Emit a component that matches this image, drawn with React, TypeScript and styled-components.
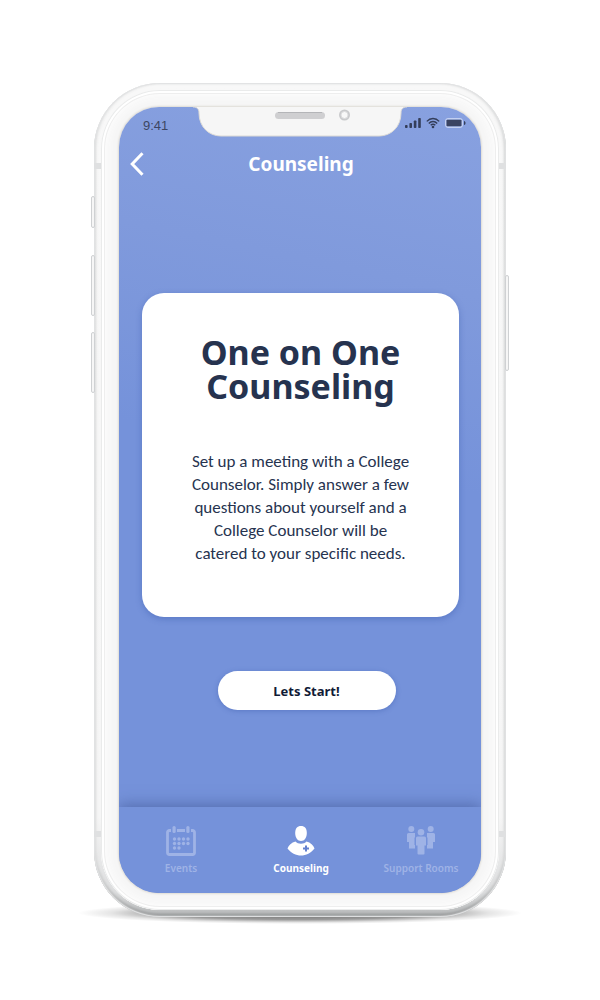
import React from "react";
import styled, { createGlobalStyle, css } from "styled-components";

const GlobalStyle = createGlobalStyle`
  *, *::before, *::after { box-sizing: border-box; }
  body {
    margin: 0;
    background: #ffffff;
    font-family: "Noto Sans", sans-serif;
  }
`;

const ink = "#26334f";

const Page = styled.div`
  min-height: 100vh;
  display: flex;
  justify-content: center;
  padding: 83px 16px;
`;

const Phone = styled.div`
  position: relative;
  width: 100%;
  max-width: 412px;
  display: flex;
  padding: 7px;
  border-radius: 66px;
  background: linear-gradient(180deg, #f8f8f8 0%, #f6f6f6 88%, #dcddde 97%, #b4b6b7 100%);
  box-shadow:
    inset 0 0 1px 1px #e2e3e4,
    inset 2px 0 3px #e0e1e1,
    inset -2px 0 3px #d8d9d9,
    inset 0 -3px 3px #8f9192;

  &::before {
    content: "";
    position: absolute;
    z-index: -1;
    left: -16px;
    right: -16px;
    bottom: -7px;
    height: 22px;
    background: radial-gradient(closest-side, rgba(0, 0, 0, 0.6), rgba(0, 0, 0, 0.4) 60%, rgba(0, 0, 0, 0.1) 85%, transparent);
  }
`;

const Bezel = styled.div`
  flex: 1;
  min-width: 0;
  display: flex;
  padding: 17px 18px;
  border-radius: 59px;
  background: #f6f6f6;
  box-shadow:
    inset 0 0 0 1px #eaebeb,
    inset 0 0 0 3px #ffffff,
    inset 0 0 0 4px #eeeeee,
    inset 0 0 8px 6px #fdfdfd;
`;

const SideKey = styled.span<{ $side: "left" | "right"; $top: number; $length: number }>`
  position: absolute;
  top: ${(p) => p.$top}px;
  ${(p) => p.$side}: -3px;
  width: 4px;
  height: ${(p) => p.$length}px;
  border: 1px solid #cfd1d3;
  border-radius: 2px;
  background: #f6f6f6;
`;

const Antenna = styled.span<{ $side: "left" | "right"; $end: "top" | "bottom" }>`
  position: absolute;
  ${(p) => p.$side}: 0;
  ${(p) => p.$end}: 80px;
  width: 7px;
  height: 6px;
  background: #dfe0e1;
`;

const Screen = styled.div`
  flex: 1;
  min-width: 0;
  display: flex;
  flex-direction: column;
  overflow: hidden;
  border-radius: 40px;
  background: linear-gradient(192deg, #88a1e0 0%, #809adc 22%, #7592da 45%, #7592da 100%);
  box-shadow: 0 0 2px 1px #dedbd4;
`;

const StatusBar = styled.div`
  display: grid;
  grid-template-columns: 1fr 202px 1fr;
`;

const Time = styled.span`
  padding: 11px 0 0 24px;
  font: 13px/16px "Liberation Sans", Arial, sans-serif;
  color: #3c4663;
`;

const Indicators = styled.span`
  display: flex;
  align-items: flex-start;
  gap: 5px;
  padding: 10px 0 0 4px;
`;

const Header = styled.header`
  display: grid;
  grid-template-columns: 36px 1fr 34px;
  align-items: center;
  padding-top: 11px;
`;

const BackButton = styled.button`
  display: flex;
  justify-content: center;
  padding: 0;
  border: 0;
  background: none;
  cursor: pointer;
`;

const Title = styled.h1`
  margin: 0;
  text-align: center;
  font-size: 19px;
  line-height: 32px;
  font-weight: 700;
  color: #ffffff;
`;

const Main = styled.main`
  flex: 1;
  display: flex;
  flex-direction: column;
  padding: 113px 22px 0 23px;
`;

const Card = styled.section`
  padding: 42px 40px 52px;
  border-radius: 22px;
  background: #ffffff;
  box-shadow: 0 2px 6px rgba(52, 84, 168, 0.4);
  text-align: center;
`;

const CardTitle = styled.h2`
  margin: 0;
  font-size: 34px;
  line-height: 34px;
  font-weight: 700;
  color: ${ink};
`;

const CardText = styled.p`
  max-width: 224px;
  margin: 47px auto 0;
  font-family: Carlito, Lato, sans-serif;
  font-size: 17px;
  line-height: 23px;
  color: ${ink};
`;

const Actions = styled.div`
  display: flex;
  justify-content: center;
  padding: 54px 0 54px 12px;
`;

const StartButton = styled.button`
  width: 178px;
  height: 39px;
  border: 0;
  border-radius: 20px;
  background: #ffffff;
  box-shadow: 0 1px 5px rgba(52, 84, 168, 0.4);
  font: 700 13px/16px "Noto Sans", sans-serif;
  color: #111b36;
  cursor: pointer;
`;

const TabBar = styled.nav`
  display: grid;
  grid-template-columns: repeat(3, 1fr);
  padding: 18px 0 18px 2px;
  background: #7592da;
  box-shadow: 0 -2px 14px rgba(50, 70, 130, 0.5);
`;

const Tab = styled.a<{ $active?: boolean }>`
  display: flex;
  flex-direction: column;
  align-items: center;
  gap: 4px;
  font-size: 10px;
  line-height: 14px;
  font-weight: 600;
  white-space: nowrap;
  text-decoration: none;
  color: #9fb3e6;
  ${(p) =>
    p.$active &&
    css`
      font-weight: 700;
      color: #ffffff;
    `}
`;

const NotchArt = styled.svg`
  display: block;
  overflow: visible;
`;

const Notch = () => (
  <NotchArt width="202" height="30" viewBox="0 0 202 30" aria-hidden="true">
    <path
      d="M-6 -2V0C-2 0 0 2 0 6C0 20 10 29 22 29H180C192 29 202 20 202 6C202 2 204 0 208 0V-2Z"
      fill="#f6f6f6"
      stroke="#dddbd6"
    />
    <rect x="76" y="5" width="50" height="7" rx="3.5" fill="#cfcfd1" />
    <path d="M79 5.5H123" stroke="#b4b5b8" />
    <circle cx="145.5" cy="8" r="5.5" fill="#c9cacc" />
    <circle cx="145.5" cy="8" r="3.5" fill="#f8f8f8" stroke="#dcdcdd" />
  </NotchArt>
);

const SignalIcon = () => (
  <svg width="16" height="12" viewBox="0 0 16 12" fill="#343e5a" aria-hidden="true">
    <rect x="0" y="8" width="2.6" height="3" rx="0.8" />
    <rect x="4.4" y="6" width="2.6" height="5" rx="0.8" />
    <rect x="8.8" y="3.5" width="2.6" height="7.5" rx="0.8" />
    <rect x="13.2" y="1" width="2.6" height="10" rx="0.8" />
  </svg>
);

const WifiIcon = () => (
  <svg width="14" height="12" viewBox="0 0 14 12" fill="none" stroke="#343e5a" strokeWidth="1.4" aria-hidden="true">
    <path d="M0.8 4.4C4.3 0.6 9.7 0.6 13.2 4.4" />
    <path d="M2.8 6.4C5.2 3.9 8.8 3.9 11.2 6.4" />
    <path d="M4.7 8.3C6 7 8 7 9.3 8.3" />
    <circle cx="7" cy="10" r="1.3" fill="#343e5a" stroke="none" />
  </svg>
);

const BatteryIcon = () => (
  <svg width="21" height="12" viewBox="0 0 21 12" aria-hidden="true">
    <rect x="0.5" y="1.5" width="17" height="9" rx="2.5" fill="#a9bbea" stroke="#c3d0f2" />
    <rect x="1.5" y="2.8" width="15" height="6.4" rx="0.8" fill="#3a4462" />
    <path d="M19 4V8C20 8 20.5 7 20.5 6C20.5 5 20 4 19 4Z" fill="#343e5a" />
  </svg>
);

const BackIcon = () => (
  <svg width="14" height="24" viewBox="0 0 14 24" fill="none" stroke="#ffffff" strokeWidth="3" aria-hidden="true">
    <path d="M12.5 1.2L2.2 12L12.5 22.8" />
  </svg>
);

const calendarDots = [
  [9.5, 14], [14, 14], [18.5, 14], [23, 14],
  [9.5, 18.5], [14, 18.5], [18.5, 18.5], [23, 18.5],
  [9.5, 23], [14, 23],
];

const EventsIcon = () => (
  <svg width="32" height="32" viewBox="0 0 32 32" fill="currentColor" aria-hidden="true">
    <path
      d="M6 5.5H4.5A2 2 0 0 0 2.5 7.5V27.5A2 2 0 0 0 4.5 29.5H27.5A2 2 0 0 0 29.5 27.5V7.5A2 2 0 0 0 27.5 5.5H26M12 5.5H20"
      fill="none"
      stroke="currentColor"
      strokeWidth="2.8"
    />
    <rect x="7.5" y="1" width="3.2" height="7" rx="1.5" />
    <rect x="21.3" y="1" width="3.2" height="7" rx="1.5" />
    {calendarDots.map(([x, y]) => (
      <circle key={`${x}-${y}`} cx={x} cy={y} r="1.7" />
    ))}
  </svg>
);

const CounselorIcon = () => (
  <svg width="32" height="32" viewBox="0 0 32 32" aria-hidden="true">
    <path
      d="M16 1C19.8 1 21.8 3.6 21.8 8C21.8 12.5 19.5 16 16 16C12.5 16 10.2 12.5 10.2 8C10.2 3.6 12.2 1 16 1Z"
      fill="#ffffff"
    />
    <path
      d="M10.5 16.5C13 19.5 19 19.5 21.5 16.5C25.5 17.5 28.5 20.5 29.5 23.5C26 28 21 30.5 16 30.5C11 30.5 6 28 2.5 23.5C3.5 20.5 6.5 17.5 10.5 16.5Z"
      fill="#ffffff"
    />
    <path d="M21 20.5V26.5M18 23.5H24" stroke="#6380cf" strokeWidth="2" />
  </svg>
);

const GroupIcon = () => (
  <svg width="32" height="32" viewBox="0 0 32 32" fill="currentColor" aria-hidden="true">
    <circle cx="6.3" cy="4" r="3" />
    <circle cx="25.7" cy="4" r="3" />
    <path d="M3.5 8H10V12.5H9.5V20H10V23.5H4V17H2V9.5A1.5 1.5 0 0 1 3.5 8Z" />
    <path d="M28.5 8H22V12.5H22.5V20H22V23.5H28V17H30V9.5A1.5 1.5 0 0 0 28.5 8Z" />
    <circle cx="16" cy="7.2" r="3.3" />
    <path d="M12.5 11.5H19.5A1.5 1.5 0 0 1 21 13V20.5H19.5V28.5A1 1 0 0 1 18.5 29.5H13.5A1 1 0 0 1 12.5 28.5V20.5H11V13A1.5 1.5 0 0 1 12.5 11.5Z" />
  </svg>
);

export default function App() {
  return (
    <Page>
      <GlobalStyle />
      <Phone>
        <SideKey $side="left" $top={113} $length={32} />
        <SideKey $side="left" $top={172} $length={61} />
        <SideKey $side="left" $top={249} $length={61} />
        <SideKey $side="right" $top={192} $length={96} />
        <Antenna $side="left" $end="top" />
        <Antenna $side="right" $end="top" />
        <Antenna $side="left" $end="bottom" />
        <Antenna $side="right" $end="bottom" />
        <Bezel>
          <Screen>
            <StatusBar>
              <Time>9:41</Time>
              <Notch />
              <Indicators>
                <SignalIcon />
                <WifiIcon />
                <BatteryIcon />
              </Indicators>
            </StatusBar>
            <Header>
              <BackButton type="button" aria-label="Back">
                <BackIcon />
              </BackButton>
              <Title>Counseling</Title>
            </Header>
            <Main>
              <Card>
                <CardTitle>One on One Counseling</CardTitle>
                <CardText>
                  Set up a meeting with a College Counselor. Simply answer a few questions about
                  yourself and a College Counselor will be catered to your specific needs.
                </CardText>
              </Card>
              <Actions>
                <StartButton type="button">Lets Start!</StartButton>
              </Actions>
            </Main>
            <TabBar>
              <Tab href="#events">
                <EventsIcon />
                Events
              </Tab>
              <Tab href="#counseling" $active aria-current="page">
                <CounselorIcon />
                Counseling
              </Tab>
              <Tab href="#support-rooms">
                <GroupIcon />
                Support Rooms
              </Tab>
            </TabBar>
          </Screen>
        </Bezel>
      </Phone>
    </Page>
  );
}
